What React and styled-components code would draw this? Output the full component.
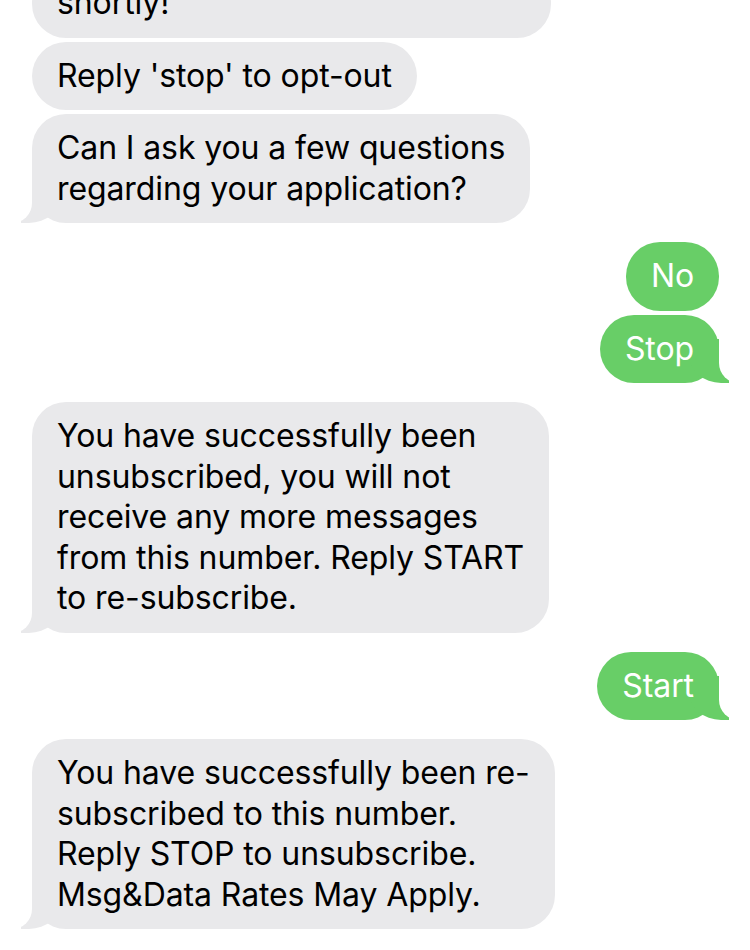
import React from "react";
import styled, { createGlobalStyle, css } from "styled-components";

const GlobalStyle = createGlobalStyle`
  html, body {
    margin: 0;
    padding: 0;
    background: #ffffff;
  }
  body {
    font-family: Inter, "Liberation Sans", sans-serif;
    -webkit-font-smoothing: antialiased;
  }
`;

const GRAY = "#e9e9eb";
const GREEN = "#68ce67";

const Thread = styled.div`
  width: 750px;
  height: 950px;
  overflow: hidden;
  box-sizing: border-box;
`;

const Inner = styled.div`
  display: flex;
  flex-direction: column;
  gap: 19px;
  padding: 0 31px 0 32px;
  margin-top: -31px;
`;

const Group = styled.div`
  display: flex;
  flex-direction: column;
  gap: 4px;
  align-items: ${(p) => (p.$mine ? "flex-end" : "flex-start")};
`;

const Bubble = styled.div`
  position: relative;
  box-sizing: border-box;
  padding: 14px 25px;
  border-radius: 34px;
  font-size: 32px;
  line-height: 40.5px;
  letter-spacing: -0.1px;
  white-space: nowrap;
  background: ${(p) => (p.$mine ? GREEN : GRAY)};
  color: ${(p) => (p.$mine ? "#ffffff" : "#000000")};
  width: ${(p) => (p.$width ? `${p.$width}px` : "auto")};

  ${(p) =>
    p.$tail &&
    !p.$mine &&
    css`
      &::before {
        content: "";
        position: absolute;
        bottom: 0;
        left: -11px;
        width: 40px;
        height: 44px;
        background: ${GRAY};
        border-bottom-right-radius: 32px 28px;
      }
      &::after {
        content: "";
        position: absolute;
        bottom: 0;
        left: -50px;
        width: 50px;
        height: 46px;
        background: #ffffff;
        border-bottom-right-radius: 20px;
      }
    `}

  ${(p) =>
    p.$tail &&
    p.$mine &&
    css`
      &::before {
        content: "";
        position: absolute;
        bottom: 0;
        right: -10px;
        width: 40px;
        height: 44px;
        background: ${GREEN};
        border-bottom-left-radius: 32px 28px;
      }
      &::after {
        content: "";
        position: absolute;
        bottom: 0;
        right: -50px;
        width: 50px;
        height: 46px;
        background: #ffffff;
        border-bottom-left-radius: 20px;
      }
    `}
`;

const Text = styled.span`
  position: relative;
  z-index: 1;
`;

const Lines = ({ lines }) =>
  lines.map((line, i) => (
    <React.Fragment key={i}>
      {i > 0 && <br />}
      {line}
    </React.Fragment>
  ));

const thread = [
  {
    mine: false,
    messages: [
      { lines: ["shortly!"], width: 519 },
      { lines: ["Reply 'stop' to opt-out"] },
      { lines: ["Can I ask you a few questions", "regarding your application?"] },
    ],
  },
  { mine: true, messages: [{ lines: ["No"] }, { lines: ["Stop"] }] },
  {
    mine: false,
    messages: [
      {
        lines: [
          "You have successfully been",
          "unsubscribed, you will not",
          "receive any more messages",
          "from this number. Reply START",
          "to re-subscribe.",
        ],
      },
    ],
  },
  { mine: true, messages: [{ lines: ["Start"] }] },
  {
    mine: false,
    messages: [
      {
        lines: [
          "You have successfully been re-",
          "subscribed to this number.",
          "Reply STOP to unsubscribe.",
          "Msg&Data Rates May Apply.",
        ],
      },
    ],
  },
];

export default function App() {
  return (
    <>
      <GlobalStyle />
      <Thread>
        <Inner>
          {thread.map((group, g) => (
            <Group key={g} $mine={group.mine}>
              {group.messages.map((msg, i) => (
                <Bubble
                  key={i}
                  $mine={group.mine}
                  $width={msg.width}
                  $tail={i === group.messages.length - 1}
                >
                  <Text>
                    <Lines lines={msg.lines} />
                  </Text>
                </Bubble>
              ))}
            </Group>
          ))}
        </Inner>
      </Thread>
    </>
  );
}
